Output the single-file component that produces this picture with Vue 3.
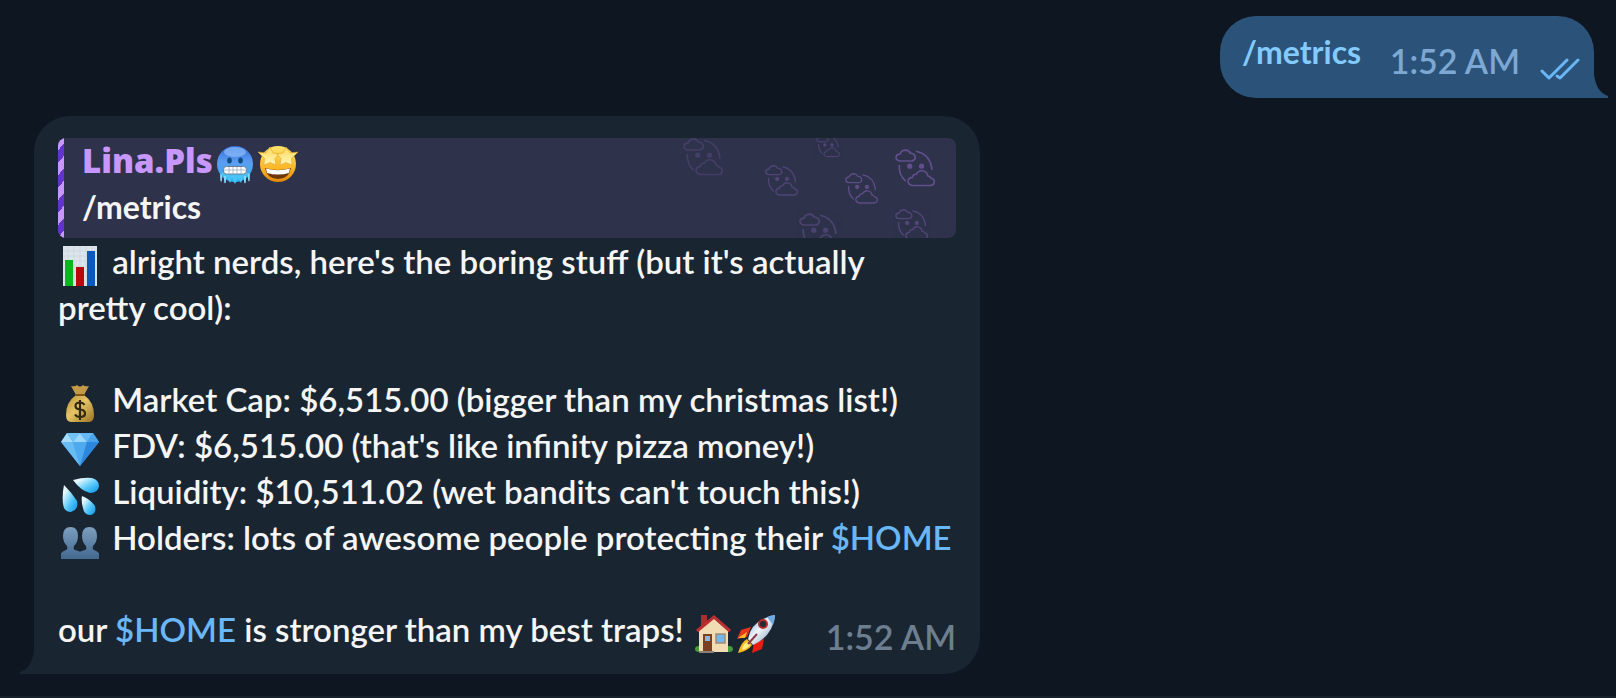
<template>
  <main class="chat">
    <svg class="defs" aria-hidden="true">
      <defs>
        <linearGradient id="gold" x1="0" y1="0" x2="0" y2="1">
          <stop offset="0" stop-color="#ffe36b" />
          <stop offset="0.6" stop-color="#fbb829" />
          <stop offset="1" stop-color="#e08608" />
        </linearGradient>
        <linearGradient id="ice" x1="0" y1="0" x2="0" y2="1">
          <stop offset="0" stop-color="#2f6fe0" />
          <stop offset="0.45" stop-color="#5d9cf0" />
          <stop offset="1" stop-color="#25b4f5" />
        </linearGradient>
        <linearGradient id="star" x1="0" y1="0" x2="0" y2="1">
          <stop offset="0" stop-color="#ffd95a" />
          <stop offset="1" stop-color="#fff6b8" />
        </linearGradient>
        <linearGradient id="sack" x1="0" y1="0" x2="1" y2="1">
          <stop offset="0" stop-color="#b98f35" />
          <stop offset="0.45" stop-color="#e6c565" />
          <stop offset="1" stop-color="#9a7224" />
        </linearGradient>
        <linearGradient id="drop" x1="0" y1="0" x2="1" y2="1">
          <stop offset="0.2" stop-color="#e4f8ff" />
          <stop offset="0.6" stop-color="#52c6f8" />
          <stop offset="1" stop-color="#0795ea" />
        </linearGradient>
        <linearGradient id="people" x1="0" y1="0" x2="0" y2="1">
          <stop offset="0" stop-color="#7c9fbe" />
          <stop offset="1" stop-color="#43688f" />
        </linearGradient>
        <linearGradient id="hull" x1="0" y1="0" x2="1" y2="1">
          <stop offset="0" stop-color="#5b9bd8" />
          <stop offset="0.45" stop-color="#f1f5f9" />
          <stop offset="1" stop-color="#6d8fb5" />
        </linearGradient>

        <symbol id="e-cold" viewBox="0 0 40 40">
          <circle cx="20" cy="19" r="18" fill="url(#ice)" />
          <ellipse cx="20" cy="7" rx="11" ry="5" fill="#9cc6fb" opacity="0.6" />
          <ellipse cx="14.500" cy="15.500" rx="2.300" ry="3" fill="#0d4c80" />
          <ellipse cx="25.500" cy="15.500" rx="2.300" ry="3" fill="#0d4c80" />
          <path d="M5 28 L6 38 L8 30 L10 39 L12 32 L15 38 L17 33 L20 39 L23 33 L26 38 L28 32 L30 39 L32 30 L34 37 L35 28Z" fill="#48c3f7" />
          <path d="M6 30V36M10 31V38M30 31V38M34 29V36" stroke="#bcecff" stroke-width="1" />
          <rect x="8.500" y="21.500" width="23" height="7.500" rx="3" fill="#fff" stroke="#6a8193" />
          <path d="M9 25H31M14 22V29M18 22V29M22 22V29M26 22V29" stroke="#9fb0bd" stroke-width="0.800" />
        </symbol>

        <symbol id="e-starry" viewBox="0 0 40 40">
          <circle cx="20" cy="19" r="18" fill="url(#gold)" />
          <path d="M7 23Q20 27 33 23Q31 34 20 34Q9 34 7 23Z" fill="#6e3708" />
          <path d="M8 23.500Q20 27 32 23.500L31 28Q20 31 9 28Z" fill="#fff" />
          <path d="M12 2L15 8L21 9L17 13.500L18 20L12 17.500L6 20L6.500 13.500L0 7L8 8Z" fill="url(#star)" stroke="#e5a524" stroke-width="0.600" />
          <path d="M28 2L25 8L19 9L23 13.500L22 20L28 17.500L34 20L33.500 13.500L40 7L32 8Z" fill="url(#star)" stroke="#e5a524" stroke-width="0.600" />
        </symbol>

        <symbol id="e-chart" viewBox="0 0 40 40">
          <rect x="3" y="0" width="34" height="40" fill="#dde5ea" />
          <path d="M3 5H37M3 10H37M3 15H37M3 20H37M3 25H37M3 30H37M3 35H37M8 0V40M14 0V40M20 0V40M26 0V40M32 0V40" stroke="#c3d3dd" stroke-width="0.600" />
          <rect x="5" y="14" width="8" height="26" fill="#0cb51d" />
          <rect x="16" y="21" width="8" height="19" fill="#b80808" />
          <rect x="27" y="5" width="8" height="35" fill="#0959c0" />
        </symbol>

        <symbol id="e-money" viewBox="0 0 40 40">
          <path d="M11 2Q15 3 17 1Q20 4 23 1Q25 3 29 2L24 11H16Z" fill="#c49a49" />
          <path d="M16 11H24Q34 18 34 31Q34 38 29 38H11Q6 38 6 31Q6 18 16 11Z" fill="url(#sack)" />
          <path d="M15 11H25" stroke="#7d5518" stroke-width="2" />
          <path d="M24.500 21Q23 18.500 20 18.500Q15.500 18.500 15.500 22Q15.500 25 20 25.500Q25 26 25 29.500Q25 33 20 33Q16.500 33 15 30.500M20 16V36" fill="none" stroke="#33290e" stroke-width="2.200" />
        </symbol>

        <symbol id="e-gem" viewBox="0 0 40 40">
          <path d="M7 3H33L39 12L20 36L1 12Z" fill="#3ca4ef" />
          <path d="M7 3L13 12H1Z" fill="#a5dcff" />
          <path d="M7 3H20L13 12Z" fill="#6fc1f8" />
          <path d="M20 3L27 12H13Z" fill="#9bd7ff" />
          <path d="M20 3H33L27 12Z" fill="#66b9f5" />
          <path d="M33 3L39 12H27Z" fill="#4ba3ea" />
          <path d="M1 12H13L20 36Z" fill="#69bbf4" />
          <path d="M13 12H27L20 36Z" fill="#4fa9ee" />
          <path d="M27 12H39L20 36Z" fill="#2c87de" />
        </symbol>

        <symbol id="e-sweat" viewBox="0 0 40 40">
          <path d="M13 4Q24 1 32 2Q39 4 39 10Q38 17 30 17Q21 15 13 4Z" fill="url(#drop)" />
          <path d="M4 9Q12 17 17 25Q19 34 11 36Q4 36 3 28Q2 18 4 9Z" fill="url(#drop)" />
          <path d="M22 20Q30 23 35 30Q37 38 30 39Q24 39 23 32Q21 25 22 20Z" fill="url(#drop)" />
        </symbol>

        <symbol id="e-people" viewBox="0 0 40 40">
          <path d="M1 37V32Q1 30 6 28Q8 27 7 24Q3 20 3 14Q3 5 10.500 5Q18 5 18 14Q18 20 14 24Q13 27 15 28Q21 29 21 32V37Z" fill="url(#people)" />
          <path d="M19 37V32Q19 29 25 28Q27 27 26 24Q22 20 22 14Q22 5 29.500 5Q37 5 37 14Q37 20 33 24Q32 27 34 28Q39 30 39 32V37Z" fill="url(#people)" />
        </symbol>

        <symbol id="e-house" viewBox="0 0 40 40">
          <ellipse cx="5" cy="35" rx="4" ry="3" fill="#459c37" />
          <ellipse cx="35" cy="35" rx="4" ry="3" fill="#459c37" />
          <rect x="7" y="1" width="6" height="12" fill="#a5322b" />
          <path d="M5 16L20 4L34 17V38H5Z" fill="#f1dcb4" />
          <path d="M3 17L20 3L36 17" fill="none" stroke="#ba3030" stroke-width="3" />
          <rect x="9" y="20" width="9" height="17" fill="#7b3f22" />
          <rect x="11" y="22" width="5" height="5" fill="#85b8e5" />
          <rect x="22" y="20" width="9" height="9" fill="#73b6ec" stroke="#a08a6e" stroke-width="1.500" />
          <path d="M5 38H20" stroke="#8a8178" stroke-width="2" />
        </symbol>

        <symbol id="e-rocket" viewBox="0 0 40 40">
          <path d="M14 13L4 16L0 25L10 23Z" fill="#e8351b" />
          <path d="M27 25L25 35L15 39L17 29Z" fill="#e81c10" />
          <path d="M1 24L10 18L8 24Z" fill="#fbbd2c" />
          <path d="M10 25Q4 28 1 39Q11 37 15 31Z" fill="#fcb81d" />
          <path d="M10 28Q6 30 5 36Q10 35 13 31Z" fill="#fff28a" />
          <path d="M11 25Q14 6 38 1Q36 22 16 31Z" fill="url(#hull)" />
          <path d="M30 3Q34 1 38 1Q38 6 36 11Z" fill="#6fabe2" />
          <circle cx="26" cy="10" r="4" fill="#222b36" stroke="#b52a25" stroke-width="2" />
          <path d="M11 30L20 20" stroke="#8d3a4a" stroke-width="2" />
        </symbol>

        <symbol id="cloud-face" viewBox="0 0 122 115">
          <g fill="none" stroke="currentColor" stroke-width="5" stroke-linecap="round">
            <path d="M14 36Q3 34 3 25Q4 15 15 15Q20 3 33 3Q43 4 46 12Q61 13 62 25Q61 35 51 36Z" />
            <path d="M52 111Q40 108 40 98Q41 87 53 86Q55 75 65 77Q72 64 84 66Q98 68 100 82Q106 82 109 88Q120 90 120 100Q119 110 108 111Z" />
            <path d="M66 7Q104 14 112 56V62" />
            <path d="M13 50Q12 79 31 96" />
          </g>
          <g fill="currentColor">
            <circle cx="45" cy="52" r="8" />
            <circle cx="81" cy="52" r="8" />
          </g>
        </symbol>
      </defs>
    </svg>

    <article class="bubble outgoing">
      <a class="link command" href="#metrics">/metrics</a>
      <time class="time">1:52 AM</time>
      <svg class="checks" viewBox="0 0 40 22" role="img" aria-label="Read">
        <path d="M2 13L9 20L27 2M17 18L20 20L38 2" />
      </svg>
      <svg class="tail" viewBox="0 0 14 24" aria-hidden="true">
        <path d="M0 0Q2 18 14 22V24H0Z" />
      </svg>
    </article>

    <article class="bubble incoming">
      <blockquote class="reply">
        <svg class="pattern" viewBox="0 0 280 100" aria-hidden="true">
          <use
            v-for="face in faces"
            :key="face.x + '-' + face.y"
            href="#cloud-face"
            :x="face.x"
            :y="face.y"
            :width="face.size"
            :height="face.size"
            :opacity="face.opacity"
          />
        </svg>
        <p class="author">
          Lina.Pls<svg class="emoji" role="img" aria-label="cold face"><use href="#e-cold" /></svg><svg class="emoji" role="img" aria-label="star-struck"><use href="#e-starry" /></svg>
        </p>
        <p class="quote">/metrics</p>
      </blockquote>

      <div class="text">
        <p>
          <svg class="emoji lead" role="img" aria-label="bar chart"><use href="#e-chart" /></svg>
          alright nerds, here's the boring stuff (but it's actually pretty cool):
        </p>
        <ul class="metrics">
          <li v-for="metric in metrics" :key="metric.label">
            <svg class="emoji lead" role="img" :aria-label="metric.alt"><use :href="metric.icon" /></svg>
            {{ metric.label }}: {{ metric.text }}
            <a v-if="metric.tag" class="link" href="#home">{{ metric.tag }}</a>
          </li>
        </ul>
        <div class="last">
          <p>
            our <a class="link" href="#home">$HOME</a> is stronger than my best traps!
            <svg class="emoji" role="img" aria-label="house"><use href="#e-house" /></svg><svg class="emoji" role="img" aria-label="rocket"><use href="#e-rocket" /></svg>
          </p>
          <time class="time">1:52 AM</time>
        </div>
      </div>
      <svg class="tail" viewBox="0 0 14 24" aria-hidden="true">
        <path d="M14 0Q12 18 0 22V24H14Z" />
      </svg>
    </article>
  </main>
</template>

<script setup>
const metrics = [
  {
    icon: "#e-money",
    alt: "money bag",
    label: "Market Cap",
    text: "$6,515.00 (bigger than my christmas list!)",
  },
  {
    icon: "#e-gem",
    alt: "gem stone",
    label: "FDV",
    text: "$6,515.00 (that's like infinity pizza money!)",
  },
  {
    icon: "#e-sweat",
    alt: "sweat droplets",
    label: "Liquidity",
    text: "$10,511.02 (wet bandits can't touch this!)",
  },
  {
    icon: "#e-people",
    alt: "busts in silhouette",
    label: "Holders",
    text: "lots of awesome people protecting their",
    tag: "$HOME",
  },
];

// faces scattered over the right side of the quoted message
const faces = [
  { x: 7, y: -1, size: 40, opacity: 0.4 },
  { x: 89, y: 26, size: 33, opacity: 0.6 },
  { x: 140, y: -4, size: 24, opacity: 0.65 },
  { x: 169, y: 34, size: 33, opacity: 0.85 },
  { x: 219, y: 10, size: 40, opacity: 0.95 },
  { x: 123, y: 74, size: 40, opacity: 0.55 },
  { x: 219, y: 70, size: 33, opacity: 0.65 },
];
</script>

<style>
body {
  background: #0e1621;
}
</style>

<style scoped>
.chat {
  display: flex;
  flex-direction: column;
  gap: 18px;
  box-sizing: border-box;
  min-height: 100vh;
  padding: 16px 22px 22px 34px;
  border-bottom: 2px solid #17212b;
  font-family: Lato, "Liberation Sans", sans-serif;
  font-size: 33px;
  font-weight: 600;
  line-height: 46px;
  color: #f5f5f5;
}

.defs {
  position: absolute;
  width: 0;
  height: 0;
}

p,
ul,
blockquote {
  margin: 0;
  padding: 0;
  list-style: none;
}

.bubble {
  position: relative;
  box-sizing: border-box;
  border-radius: 36px;
}

.outgoing {
  display: flex;
  align-self: flex-end;
  width: 374px;
  max-width: 100%;
  padding: 13px 14px 14px 22px;
  border-bottom-right-radius: 0;
  background: #2b5278;
}

.incoming {
  width: 100%;
  max-width: 946px;
  padding: 22px 24px;
  border-bottom-left-radius: 0;
  background: #1a2532;
}

/* little corner next to the last line of a bubble */
.tail {
  position: absolute;
  bottom: 0;
  width: 14px;
  height: 24px;
}

.outgoing .tail {
  left: 100%;
  fill: #2b5278;
}

.incoming .tail {
  right: 100%;
  fill: #1a2532;
}

.link {
  color: #6ab7f8;
  text-decoration: none;
}

.command,
.quote {
  font-size: 32px;
  font-weight: 700;
}

.command {
  color: #82caff;
}

.time {
  margin-left: auto;
  font-size: 34px;
  color: #6d7f8f;
  white-space: nowrap;
}

.outgoing .time {
  padding-top: 9px;
  color: #7da8d3;
}

.checks {
  align-self: flex-end;
  width: 40px;
  height: 22px;
  margin: 0 0 4px 20px;
  fill: none;
  stroke: #6ab7f8;
  stroke-width: 3;
  stroke-linecap: round;
  stroke-linejoin: round;
}

.reply {
  position: relative;
  overflow: hidden;
  padding: 0 10px 8px 24px;
  border-radius: 8px;
  background: #2e324b;
}

.reply::before {
  content: "";
  position: absolute;
  inset: 0 auto 0 0;
  width: 6px;
  background: repeating-linear-gradient(130deg, #c797ff 0 8px, #6234cb 8px 16px);
}

.pattern {
  position: absolute;
  top: 0;
  right: 0;
  width: 280px;
  height: 100px;
  color: #665191;
}

.author {
  font-family: "Open Sans", Lato, sans-serif;
  font-weight: 800;
  color: #c797ff;
}

.emoji {
  width: 40px;
  height: 40px;
  margin: -4px 1px -4px 2px;
  vertical-align: -8px;
}

.lead {
  margin-right: 4px;
}

.metrics {
  padding: 46px 0;
}

.last {
  display: flex;
}

.last .time {
  margin-bottom: -8px;
  padding-top: 8px;
}
</style>
